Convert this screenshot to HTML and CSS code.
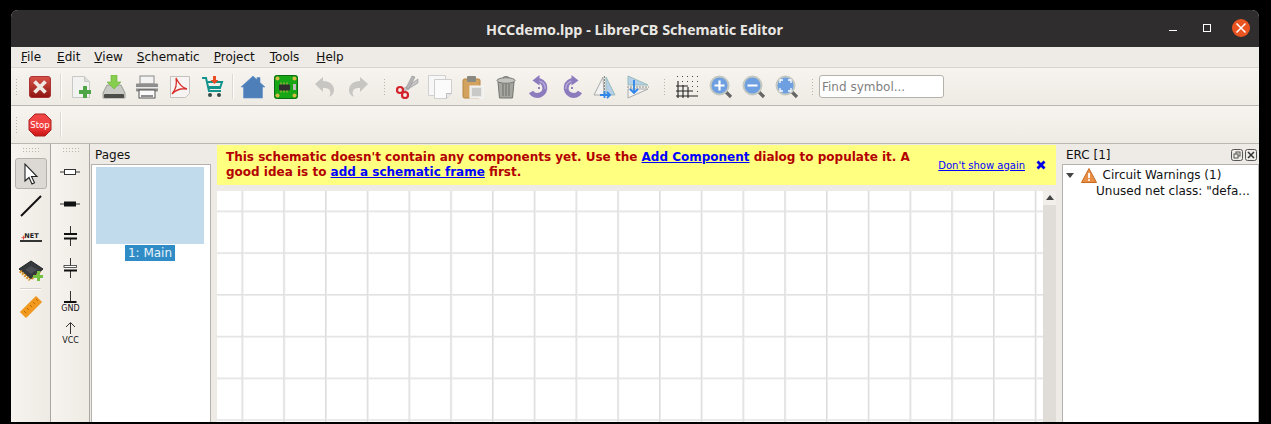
FILE: index.html
```html
<!DOCTYPE html>
<html lang="en">
<head>
<meta charset="utf-8">
<title>HCCdemo.lpp - LibrePCB Schematic Editor</title>
<link rel="stylesheet" href="styles.css">
</head>
<body>
<div class="window">
  <header class="titlebar">
    <div class="title">HCCdemo.lpp - LibrePCB Schematic Editor</div>
    <div class="wm">
      <span class="wm-min"></span>
      <span class="wm-max"></span>
      <span class="wm-close"><svg width="12" height="12" viewBox="0 0 12 12"><path d="M1.500 1.500l9 9M10.500 1.500l-9 9" stroke="#fff" stroke-width="1.500"/></svg></span>
    </div>
  </header>
  <nav class="menubar">
    <span class="menu"><u>F</u>ile</span>
    <span class="menu"><u>E</u>dit</span>
    <span class="menu"><u>V</u>iew</span>
    <span class="menu"><u>S</u>chematic</span>
    <span class="menu"><u>P</u>roject</span>
    <span class="menu"><u>T</u>ools</span>
    <span class="menu"><u>H</u>elp</span>
  </nav>
  <div class="toolbar tb-main">
    <span class="handle handle-first"></span>
    <span class="tool"><svg width="24" height="24" viewBox="0 0 24 24"><defs><linearGradient id="rx" x1="0" y1="0" x2="0" y2="1"><stop offset="0" stop-color="#d9534a"/><stop offset="1" stop-color="#8e1410"/></linearGradient></defs><rect x="1.500" y="1.500" width="21" height="21" rx="2.500" fill="url(#rx)" stroke="#a33"/><path d="M6.500 6.500l11 11M17.500 6.500l-11 11" stroke="#efe9e4" stroke-width="3.800"/></svg></span>
    <span class="sep"></span>
    <span class="tool"><svg width="24" height="24" viewBox="0 0 24 24"><path d="M3.500 1.500h12l5 5v16h-17z" fill="#f2f2f0" stroke="#c8c8c6"/><path d="M15.500 1.500v5h5" fill="#dcdcda" stroke="#c8c8c6"/><path d="M10 15h4v-4h4v4h4v4h-4v4h-4v-4h-4z" fill="#4ea545"/></svg></span>
    <span class="tool"><svg width="24" height="24" viewBox="0 0 24 24"><path d="M5 10h14l4 8v5H1v-5z" fill="#c9c9c4" stroke="#9a9a94"/><rect x="2" y="19" width="20" height="4" rx="1" fill="#4c4c48"/><path d="M9 0h6v7h4l-7 7-7-7h4z" fill="#86cf4e" stroke="#6aae3c" stroke-width=".6"/></svg></span>
    <span class="tool"><svg width="24" height="24" viewBox="0 0 24 24"><rect x="5" y="1" width="14" height="8" fill="#f3f3f3" stroke="#8a8a8a"/><rect x="1" y="8.500" width="22" height="8" rx="1" fill="#8e8e8c"/><rect x="1" y="12" width="22" height="1.500" fill="#e8e8e8"/><rect x="4" y="15" width="16" height="8" fill="#fafafa" stroke="#555"/><path d="M6 21h12" stroke="#222"/></svg></span>
    <span class="tool"><svg width="24" height="24" viewBox="0 0 24 24"><path d="M2.500 1.500h19v17l-4 4h-15z" fill="#f7f5f4" stroke="#c4c0bd"/><path d="M8 3c1 5 1 10-4 16 4-4 9-6 15-5-5-1-8-5-11-11z" fill="none" stroke="#d9302c" stroke-width="1.300"/></svg></span>
    <span class="tool"><svg width="24" height="24" viewBox="0 0 24 24"><path d="M1 3h4l3 13h12M6 7h15l-2 6H8" fill="none" stroke="#12938c" stroke-width="2"/><rect x="7.500" y="11" width="11.500" height="2.500" fill="#12938c"/><circle cx="9" cy="20" r="2" fill="#374a4a"/><circle cx="18" cy="20" r="2" fill="#374a4a"/><path d="M12 1h3v4h2.500L13.500 9 9.500 5H12z" fill="#ea4d25"/></svg></span>
    <span class="sep"></span>
    <span class="tool"><svg width="24" height="24" viewBox="0 0 24 24"><path d="M12 1l4 3.600V2.500h3v5L24 12h-2.500v11h-19V12H0z" fill="#4f7fb8" stroke="#5f8fc8" stroke-width=".6"/></svg></span>
    <span class="tool"><svg width="24" height="24" viewBox="0 0 24 24"><rect x="0" y="0" width="24" height="24" rx="3" fill="#16a616"/><rect x=".5" y=".5" width="23" height="23" rx="3" fill="none" stroke="#0a6b12"/><circle cx="3.500" cy="3.500" r="2" fill="#d7b94a"/><circle cx="20.500" cy="3.500" r="2" fill="#d7b94a"/><circle cx="3.500" cy="20.500" r="2" fill="#d7b94a"/><circle cx="20.500" cy="20.500" r="2" fill="#d7b94a"/><path d="M7 7.500v10M10 7.500v10M13 7.500v10" stroke="#d7b94a"/><rect x="5" y="9.500" width="11" height="6" rx="1" fill="#2e2e2e"/><rect x="19" y="9" width="3" height="6" fill="#bdbdbd"/></svg></span>
    <span class="gap"></span>
    <span class="tool"><svg width="24" height="24" viewBox="0 0 24 24"><path d="M2 9l8-7v4c7 0 11 4 11 9 0 4-3 6-5 7 1-2 2-4 1-6-1-3-4-3-7-3v4z" fill="#c8c6c2"/></svg></span>
    <span class="tool"><svg width="24" height="24" viewBox="0 0 24 24"><path d="M22 9l-8-7v4C7 6 3 10 3 15c0 4 3 6 5 7-1-2-2-4-1-6 1-3 4-3 7-3v4z" fill="#c8c6c2"/></svg></span>
    <span class="handle"></span>
    <span class="tool"><svg width="24" height="24" viewBox="0 0 24 24"><path d="M23 4L8 14l2 2 13-8z" fill="#c4c4c4" stroke="#888" stroke-width=".5"/><path d="M17 1L11 13l2.500 1.500L20 2z" fill="#b5b5b5" stroke="#888" stroke-width=".5"/><circle cx="5" cy="15" r="3" fill="none" stroke="#d3222a" stroke-width="2.200"/><circle cx="10" cy="20" r="3" fill="none" stroke="#d3222a" stroke-width="2.200"/></svg></span>
    <span class="tool"><svg width="24" height="24" viewBox="0 0 24 24"><path d="M.5.500h17v20H.5z" fill="#f7f7f7" stroke="#d0d0d0"/><path d="M6.500 4.500h17v14l-5 5h-12z" fill="#fbfbfb" stroke="#cfcfcf"/><path d="M18.500 23.500v-5h5" fill="#e8e8e8" stroke="#bdbdbd"/></svg></span>
    <span class="tool"><svg width="24" height="24" viewBox="0 0 24 24"><rect x="2" y="4" width="17" height="19" rx="1.500" fill="#d4a25f" stroke="#b58442"/><rect x="6" y="1" width="9" height="6" rx="1" fill="#8a8a82"/><rect x="9" y="11" width="13" height="12" fill="#e7e7e5" stroke="#f8f8f8"/><rect x="11" y="13" width="9" height="8" fill="#c9c9c7"/></svg></span>
    <span class="tool"><svg width="24" height="24" viewBox="0 0 24 24"><path d="M4 7h16l-1.500 16h-13z" fill="#a5a6a0" stroke="#74756f"/><path d="M9 9v12M12 9v12M15 9v12" stroke="#6d6e68"/><ellipse cx="12" cy="5.500" rx="9" ry="2.800" fill="#c3c4bf" stroke="#777"/><path d="M9 3c1-2 5-2 6 0" fill="none" stroke="#777" stroke-width="1.200"/></svg></span>
    <span class="tool"><svg width="24" height="24" viewBox="0 0 24 24"><path d="M10 5.500A7.500 7.500 0 1 1 4 17" fill="none" stroke="#8d7cbd" stroke-width="5"/><path d="M10 6.500A6.500 6.500 0 0 1 18 14" fill="none" stroke="#b5a8d8" stroke-width="1.500"/><path d="M12.500 0L5.500 5.500l7 5z" fill="#8d7cbd"/><circle cx="12" cy="13" r="1" fill="#6b5a9a"/></svg></span>
    <span class="tool"><svg width="24" height="24" viewBox="0 0 24 24"><path d="M14 5.500A7.500 7.500 0 1 0 20 17" fill="none" stroke="#8d7cbd" stroke-width="5"/><path d="M14 6.500A6.500 6.500 0 0 0 6 14" fill="none" stroke="#b5a8d8" stroke-width="1.500"/><path d="M11.500 0l7 5.500-7 5z" fill="#8d7cbd"/><circle cx="12" cy="13" r="1" fill="#6b5a9a"/></svg></span>
    <span class="tool"><svg width="24" height="24" viewBox="0 0 24 24"><path d="M10 2L1 20h10z" fill="#f2f2f2" stroke="#aaa"/><path d="M13 2l9 18H13z" fill="#b5cfe8" stroke="#9bb"/><path d="M11.500 1v22" stroke="#888" stroke-dasharray="2 1"/><path d="M7 20h10M14 17l3 3-3 3M11.500 16v7" stroke="#2f86e8" stroke-width="1.800" fill="none"/></svg></span>
    <span class="tool"><svg width="24" height="24" viewBox="0 0 24 24"><path d="M2 1l20 9H2z" fill="#b5cfe8" stroke="#9bb"/><path d="M2 14h20L2 23z" fill="#f2f2f2" stroke="#aaa"/><path d="M1 12h22" stroke="#888" stroke-dasharray="2 1"/><path d="M8 5v12M4 14l4 4 4-4" stroke="#2f86e8" stroke-width="1.800" fill="none"/></svg></span>
    <span class="handle"></span>
    <span class="tool"><svg width="24" height="24" viewBox="0 0 24 24"><g fill="#444"><path d="M2 1h1v1H2zM7 1h1v1H7zM12 1h1v1h-1zM17 1h1v1h-1zM22 1h1v1h-1zM7 6h1v1H7zM12 6h1v1h-1zM17 6h1v1h-1zM22 6h1v1h-1zM17 11h1v1h-1zM22 11h1v1h-1zM22 16h1v1h-1z"/></g><path d="M3 6v17M8 10v13M13 12v11M1 11h12M1 16h17M1 21h22" stroke="#222" stroke-width="1.100"/></svg></span>
    <span class="tool zoomtool"><svg width="24" height="24" viewBox="0 0 24 24"><use href="#lens"/><path d="M5.500 10.500h10M10.500 5.500v10" stroke="#fff" stroke-width="2.200"/></svg></span>
    <span class="tool"><svg width="24" height="24" viewBox="0 0 24 24"><use href="#lens"/><path d="M5.500 10.500h10" stroke="#fff" stroke-width="2.200"/></svg></span>
    <span class="tool"><svg width="24" height="24" viewBox="0 0 24 24"><use href="#lens"/><path d="M5 8V5h3M13 5h3v3M5 13v3h3M13 16h3v-3" stroke="#fff" stroke-width="1.300" fill="none"/></svg></span>
    <span class="handle handle-last"></span>
    <input class="find" type="text" placeholder="Find symbol...">
  </div>
  <div class="toolbar tb-stop">
    <span class="handle handle-first"></span>
    <span class="tool"><svg width="24" height="24" viewBox="0 0 24 24"><defs><linearGradient id="st" x1="0" y1="0" x2="0" y2="1"><stop offset="0" stop-color="#f04848"/><stop offset=".6" stop-color="#f23b3b"/><stop offset="1" stop-color="#c91414"/></linearGradient></defs><path d="M7 1h10l6 6v10l-6 6H7l-6-6V7z" fill="url(#st)" stroke="#a82020"/><text x="12" y="15" class="stoptext" text-anchor="middle">Stop</text></svg></span>
    <span class="sep"></span>
  </div>
  <main class="body">
    <aside class="vbar">
      <span class="vhandle"></span>
      <span class="vtool active"><svg width="24" height="24" viewBox="0 0 24 24"><path d="M6 2v17l4-3.500 3 6.500 2.500-1.200-3-6.300H18z" fill="#fff" stroke="#222" stroke-width="1.100"/></svg></span>
      <span class="vtool"><svg width="24" height="24" viewBox="0 0 24 24"><path d="M2 22L22 2" stroke="#111" stroke-width="2"/></svg></span>
      <span class="vtool"><svg width="24" height="24" viewBox="0 0 24 24"><path d="M1 15h22" stroke="#333" stroke-width="1.800"/><text x="12.500" y="11.500" class="nettext" text-anchor="middle">NET</text><path d="M2.500 11.700h4M4.500 9.700v4" stroke="#e0342c" stroke-width=".8"/></svg></span>
      <span class="vtool"><svg width="24" height="24" viewBox="0 0 24 24"><path d="M0 11L12 3l12 8-12 10z" fill="#35383c" stroke="#222"/><path d="M12 8l6 3.500-6 4.500-6-4.500z" fill="#4a4d52"/><path d="M1 13l10 9" stroke="#d9952a" stroke-width="3" stroke-dasharray="2 1"/><path d="M13 21l9-8" stroke="#d9952a" stroke-width="2" stroke-dasharray="2 1"/><path d="M14 17h4v-4h3v4h3v3h-3v3h-3v-3h-4z" fill="#76c043"/></svg></span>
      <span class="vsep"></span>
      <span class="vtool"><svg width="24" height="24" viewBox="0 0 24 24"><path d="M1.500 17L17 1.500 22.500 7 7 22.500z" fill="#f39a1e" stroke="#eb8f12"/><path d="M5 16l2 2M8 13l2 2M11 10l2 2M14 7l2 2M17 4l2 2" stroke="#b26a10"/></svg></span>
    </aside>
    <aside class="vbar vbar2">
      <span class="vhandle"></span>
      <span class="vtool"><svg width="24" height="24" viewBox="0 0 24 24"><path d="M2 12h20" stroke="#333"/><rect x="6.500" y="9.500" width="11" height="5" fill="#fff" stroke="#333"/></svg></span>
      <span class="vtool"><svg width="24" height="24" viewBox="0 0 24 24"><path d="M2 12h20" stroke="#333"/><rect x="6" y="9.500" width="12" height="5" fill="#111"/></svg></span>
      <span class="vtool"><svg width="24" height="24" viewBox="0 0 24 24"><path d="M12.500 2v8M12.500 14v8" stroke="#333"/><rect x="6" y="9" width="13" height="2" fill="#111"/><rect x="6" y="13.500" width="13" height="2" fill="#111"/></svg></span>
      <span class="vtool"><svg width="24" height="24" viewBox="0 0 24 24"><path d="M12.500 2v8M12.500 14v8" stroke="#333"/><rect x="6" y="9.500" width="12.500" height="2" fill="#fff" stroke="#333" stroke-width=".8"/><rect x="6" y="13.500" width="13" height="2" fill="#111"/></svg></span>
      <span class="vtool"><svg width="24" height="24" viewBox="0 0 24 24"><path d="M12.500 3v10" stroke="#333"/><rect x="6" y="13" width="12.500" height="2" fill="#111"/><text x="12.500" y="23" class="symtext" text-anchor="middle">GND</text></svg></span>
      <span class="vtool"><svg width="24" height="24" viewBox="0 0 24 24"><path d="M12.500 14V3M8 7l4.500-4.500L17 7" stroke="#333" fill="none"/><text x="12.500" y="23" class="symtext" text-anchor="middle">VCC</text></svg></span>
    </aside>
    <section class="dock pages">
      <div class="dock-title">Pages</div>
      <div class="pagelist">
        <div class="thumb"></div>
        <div class="thumb-label"><span>1: Main</span></div>
      </div>
    </section>
    <section class="center">
      <div class="banner">
        <p class="banner-text">This schematic doesn't contain any components yet. Use the <a href="#">Add Component</a> dialog to populate it. A good idea is to <a href="#">add a schematic frame</a> first.</p>
        <a class="dismiss" href="#">Don't show again</a>
        <svg class="banner-x" width="10" height="10" viewBox="0 0 10 10"><path d="M1.500 1.500l7 7M8.500 1.500l-7 7" stroke="#0000e6" stroke-width="2.800"/></svg>
      </div>
      <div class="viewport">
        <div class="canvas"></div>
        <div class="vscroll"><span class="up"></span></div>
      </div>
    </section>
    <section class="dock erc">
      <div class="dock-head">
        <span class="dock-title">ERC [1]</span>
        <span class="dock-btns">
          <svg width="12" height="12" viewBox="0 0 12 12"><rect x=".5" y=".5" width="11" height="11" rx="2" fill="none" stroke="#555"/><rect x="5" y="3" width="4" height="4" fill="none" stroke="#555"/><rect x="3" y="5" width="4" height="4" fill="#eeebe6" stroke="#555"/></svg>
          <svg width="12" height="12" viewBox="0 0 12 12"><rect x=".5" y=".5" width="11" height="11" rx="2" fill="none" stroke="#555"/><path d="M3 3l6 6M9 3l-6 6" stroke="#333" stroke-width="1.500"/></svg>
        </span>
      </div>
      <div class="tree">
        <div class="tree-row">
          <span class="arrow"></span>
          <svg class="warn" width="16" height="15" viewBox="0 0 16 15"><path d="M8 .5L15.500 14.500H.5z" fill="#e88f47" stroke="#c96a1f"/><path d="M8 5v5" stroke="#fff" stroke-width="1.800"/><circle cx="8" cy="12" r="1" fill="#fff"/></svg>
          <span>Circuit Warnings (1)</span>
        </div>
        <div class="tree-child">Unused net class: "defa...</div>
      </div>
    </section>
  </main>
</div>
<svg class="defs" width="0" height="0"><defs><g id="lens"><path d="M15 15l7 7" stroke="#666" stroke-width="3.200"/><circle cx="10.500" cy="10.500" r="9" fill="#6e9fe0" stroke="#c3c8c0" stroke-width="2"/></g></defs></svg>
</body>
</html>
```
FILE: styles.css
```css
* { box-sizing: border-box; }
html, body { margin: 0; height: 100%; overflow: hidden; }
body { background: #000; padding: 10px 12px 2px 11px; font: 12px "DejaVu Sans", sans-serif; color: #111; }
.window { height: 100%; display: flex; flex-direction: column; background: #eeebe6; border-radius: 7px 7px 0 0; overflow: hidden; }

.titlebar { flex: 0 0 37px; background: #2f2d2d; display: flex; align-items: center; position: relative; }
.title { flex: 1; text-align: center; color: #e9e7e3; font: 700 14.400px "Noto Sans", sans-serif; padding-right: 1px; margin-top: 1px; }
.wm { position: absolute; right: 9px; top: 9px; display: flex; align-items: center; }
.wm-min { width: 8px; height: 1.500px; background: #fff; margin: 5px 26px 0 0; }
.wm-max { width: 8px; height: 8px; border: 1px solid #fff; margin-right: 21px; }
.wm-close { width: 18px; height: 18px; border-radius: 50%; background: #e95420; display: flex; align-items: center; justify-content: center; }

.menubar { flex: 0 0 20px; display: flex; align-items: center; padding-left: 3px; background: #eeebe6; }
.menu { padding: 0 7px; font-size: 12px; line-height: 16px; color: #111; }
.menu:nth-child(1) { margin-right: 2px; }
.menu:nth-child(5) { margin-right: 1px; }
.menu:nth-child(6) { margin-right: 3px; }
.menu u { text-underline-offset: 1px; }

.toolbar { display: flex; align-items: center; background: linear-gradient(#f7f4ef, #eeebe5); border-top: 1px solid #d8d5cf; border-bottom: 1px solid #bab7b2; }
.tb-main { flex: 0 0 39px; }
.tb-stop { flex: 0 0 38px; border-top: 0; }
.handle { flex: 0 0 4px; height: 17px; margin: 0 3px 0 9px; background-image: radial-gradient(circle, #b8b5af 0.7px, transparent 0.8px); background-size: 3px 3px; }
.handle-first { margin: 0 4.500px 0 4px; }
.handle-last { margin: 0 4px 0 8px; }
.tool { flex: 0 0 33px; height: 24px; display: flex; align-items: center; justify-content: center; }
.tool svg { display: block; }
.zoomtool { margin-left: 1px; }
.sep { flex: 0 0 1px; height: 25px; margin: 0 3.250px; background: #dcd9d3; box-shadow: 1px 0 0 #fdfcfa; }
.gap { flex: 0 0 5.500px; }
.stoptext { font: 8.500px "DejaVu Sans", sans-serif; fill: #fff; }
.find { margin: 0; width: 125px; height: 23px; border: 1px solid #b5b2ac; border-radius: 3px; background: #fff; padding: 0 2px; font: 12px "DejaVu Sans", sans-serif; color: #111; }
.find::placeholder { color: #7f7f7f; opacity: 1; }

.body { flex: 1; display: flex; min-height: 0; background: #eeebe6; }
.vbar { flex: 0 0 40px; display: flex; flex-direction: column; align-items: center; background: linear-gradient(90deg, #f7f4ef, #eeebe5); border-right: 1px solid #aaa7a2; }
.vbar2 { flex-basis: 39px; }
.vhandle { flex: 0 0 6px; width: 17px; margin: 3px 0 5px; background-image: radial-gradient(circle, #b8b5af 0.7px, transparent 0.8px); background-size: 3px 3px; }
.vbar2 .vhandle { margin-bottom: 3px; }
.vtool { flex: 0 0 32px; width: 32px; display: flex; align-items: center; justify-content: center; }
.vtool.active { flex-basis: 31px; background: #dcd9d4; border: 1px solid #b5b2ad; border-radius: 3px; margin-bottom: 1px; }
.vsep { flex: 0 0 1px; width: 21px; margin: 2px 0 2px; background: #d6d3ce; box-shadow: 0 1px 0 #fdfcfa; }
.nettext { font: 700 6.500px "DejaVu Sans", sans-serif; fill: #222; }
.symtext { font: 8px "DejaVu Sans", sans-serif; fill: #111; }

.dock-title { font-size: 12px; line-height: 16px; color: #111; }
.pages { flex: 0 0 127px; display: flex; flex-direction: column; padding: 3px 6px 0 1px; }
.pages .dock-title { padding-left: 4px; }
.pagelist { flex: 1; background: #fff; border: 1px solid #b5b2ad; border-bottom: 0; padding: 2px 6px 0 4px; margin-top: 1px; }
.thumb { height: 77px; background: #c1dbed; }
.thumb-label { text-align: center; margin-top: 1px; font-size: 12px; line-height: 15px; }
.thumb-label span { display: inline-block; background: #308cc6; color: #e8f2f8; padding: 1px 3px 0; }

.center { flex: 0 0 839px; display: flex; flex-direction: column; padding-top: 1px; }
.banner { flex: 0 0 40px; background: #ffff80; display: flex; align-items: center; padding: 0 10px 0 9px; }
.banner-text { margin: 0; flex: 0 0 698px; font-weight: 700; font-size: 12px; line-height: 15px; color: #b30000; }
.banner-text a { color: #0000ff; }
.dismiss { font-size: 10px; color: #0000ff; margin-left: auto; margin-right: 11px; white-space: nowrap; }
.viewport { flex: 1; min-height: 0; display: flex; margin-top: 6px; }
.canvas { flex: 1; background-color: #fff; background-image: linear-gradient(90deg, #dcdcdc 1px, #ebebeb 1px, #ebebeb 2px, transparent 2px), linear-gradient(#e2e2e2 1px, #ececec 1px, #ececec 2px, transparent 2px); background-size: 41.750px 41.750px; background-position: 24.500px 0, 0 19.500px; }
.vscroll { flex: 0 0 13px; background: #e0ddd8; }
.up { display: block; height: 14px; background: #f2efea; position: relative; }
.up::after { content: ""; position: absolute; left: 2.500px; top: 4px; border: 4px solid transparent; border-bottom: 5px solid #444; border-top: 0; }

.erc { flex: 0 0 203px; display: flex; flex-direction: column; padding: 2px 0 0 6px; }
.dock-head { display: flex; align-items: center; height: 17px; padding-left: 4px; }
.dock-btns { margin-left: auto; display: flex; gap: 2px; margin-right: 2px; }
.dock-btns svg { display: block; }
.tree { flex: 1; background: #fff; border: 1px solid #b5b2ad; border-bottom: 0; margin-top: 1px; padding-top: 1px; font-size: 12px; color: #111; }
.tree-row { display: flex; align-items: center; padding-left: 3px; height: 18px; }
.arrow { width: 0; height: 0; border: 4.500px solid transparent; border-top: 5px solid #444; border-bottom: 0; margin-right: 6.500px; }
.warn { margin-right: 6px; }
.tree-child { padding-left: 33px; white-space: nowrap; line-height: 14px; }
.defs { position: absolute; }
```
